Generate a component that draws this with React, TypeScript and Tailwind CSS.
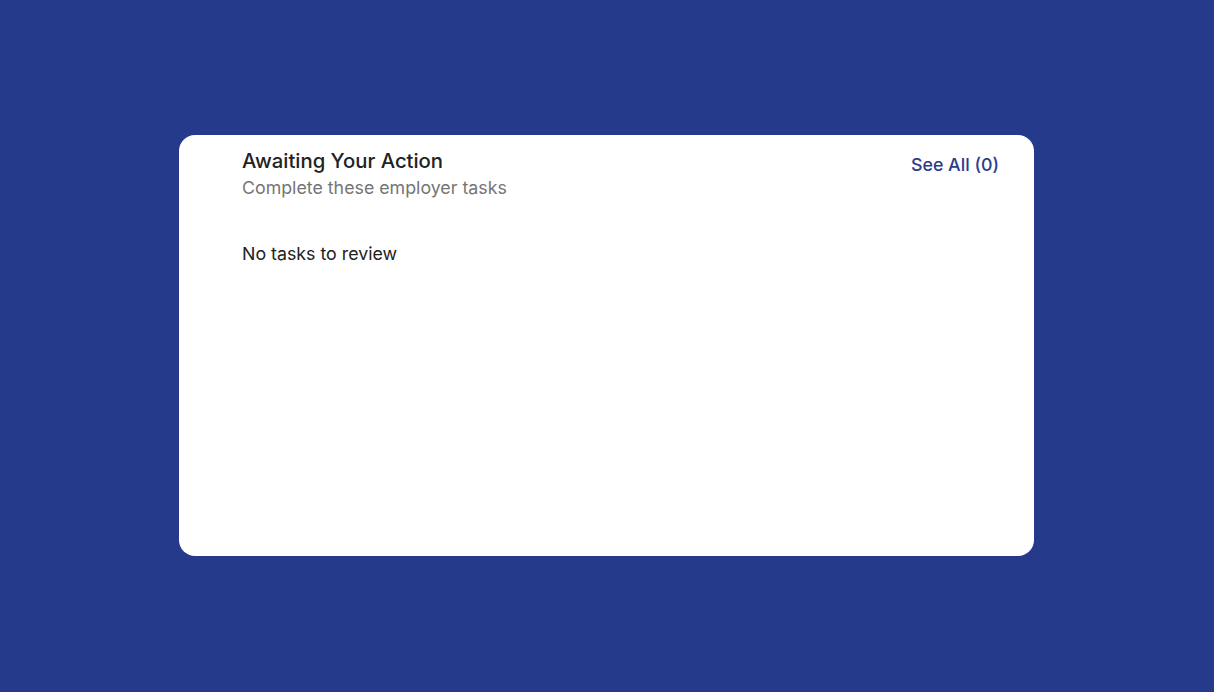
export default function App() {
  return (
    <div className="h-[692px] w-full bg-[#263a8c] pl-[179px] pt-[135px] font-['Inter',sans-serif]">
      <section className="h-[421px] w-[855px] rounded-2xl bg-white pl-[63px] pr-[35px] pt-[15px]">
        <div className="flex items-start justify-between">
          <div>
            <h2 className="text-[20.3px] leading-[22px] font-medium text-[#222]">Awaiting Your Action</h2>
            <p className="mt-[5px] text-[17.8px] leading-[22px] text-[#757575]">Complete these employer tasks</p>
          </div>
          <a href="#" className="mt-[4px] text-[17.8px] leading-[22px] font-medium text-[#2a3c8c]">See All (0)</a>
        </div>
        <p className="mt-[44px] text-[17.8px] leading-[22px] text-[#222]">No tasks to review</p>
      </section>
    </div>
  )
}
